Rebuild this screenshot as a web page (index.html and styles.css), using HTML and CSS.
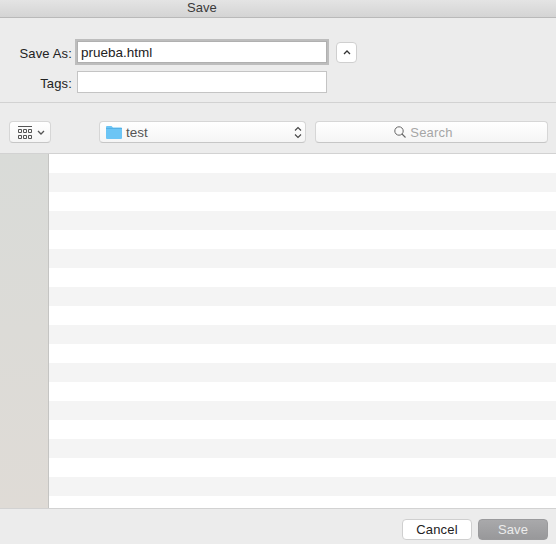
FILE: index.html
```html
<!DOCTYPE html>
<html lang="en">
<head>
    <meta charset="UTF-8">
    <title>Save</title>
    <link rel="stylesheet" href="styles.css">
</head>
<body>
    <div class="dialog">
        <div class="titlebar">Save</div>

        <div class="form">
            <div class="form-row">
                <label class="form-label" for="save-as">Save As:</label>
                <input class="field field-focus" id="save-as" type="text" value="prueba.html">
                <button class="collapse-btn">
                    <svg width="8" height="5" viewBox="0 0 8 5"><path d="M1 4L4 1L7 4" fill="none" stroke="#333" stroke-width="1.3"/></svg>
                </button>
            </div>
            <div class="form-row form-row-tags">
                <label class="form-label" for="tags">Tags:</label>
                <input class="field" id="tags" type="text">
            </div>
        </div>

        <div class="toolbar">
            <button class="tool-btn view-btn">
                <svg width="15" height="13" viewBox="0 0 15 13">
                    <path d="M0 0.5H14" stroke="#555" fill="none"/>
                    <path d="M0.5 3.5h3v3h-3zM5.5 3.5h3v3h-3zM10.5 3.5h3v3h-3zM0.5 9.5h3v3h-3zM5.5 9.5h3v3h-3zM10.5 9.5h3v3h-3z" stroke="#555" fill="none"/>
                </svg>
                <svg width="8" height="5" viewBox="0 0 8 5"><path d="M1 1L4 4L7 1" fill="none" stroke="#555" stroke-width="1.3"/></svg>
            </button>
            <button class="tool-btn folder-btn">
                <svg width="16" height="14" viewBox="0 0 16 14">
                    <path d="M0 2a1 1 0 0 1 1-1h4.5l1.5 1.5h8a1 1 0 0 1 1 1V13a1 1 0 0 1-1 1H1a1 1 0 0 1-1-1z" fill="#6cc5f5"/>
                    <path d="M0 3.5H16" stroke="#4aa8e0" stroke-width="0.7"/>
                </svg>
                <span class="folder-name">test</span>
                <svg class="stepper" width="8" height="13" viewBox="0 0 8 13"><path d="M1 4.5L4 1.5L7 4.5M1 8.5L4 11.5L7 8.5" fill="none" stroke="#444" stroke-width="1.1"/></svg>
            </button>
            <div class="tool-btn search-box">
                <svg width="12" height="12" viewBox="0 0 12 12"><circle cx="5" cy="5" r="4.2" fill="none" stroke="#666" stroke-width="1"/><path d="M8 8L11.5 11.5" stroke="#666" stroke-width="1.1"/></svg>
                <span>Search</span>
            </div>
        </div>

        <div class="browser">
            <div class="sidebar"></div>
            <div class="file-list"></div>
        </div>

        <div class="footer">
            <button class="footer-btn cancel-btn">Cancel</button>
            <button class="footer-btn save-btn">Save</button>
        </div>
    </div>
</body>
</html>
```

FILE: styles.css
```css
* {
    box-sizing: border-box;
}
html, body {
    margin: 0;
    height: 100%;
}
body {
    font-family: "Liberation Sans", Arial, sans-serif;
    font-size: 13px;
    color: #222;
    background-color: #ececec;
}
button, input {
    font-family: inherit;
    font-size: 13px;
    margin: 0;
}
.dialog {
    display: flex;
    flex-direction: column;
    width: 556px;
    height: 544px;
    overflow: hidden;
}
.titlebar {
    height: 18px;
    line-height: 15px;
    padding-left: 187px;
    color: #3a3a3a;
    background: linear-gradient(#e4e4e4, #d4d4d4);
    border-bottom: 1px solid #b9b9b9;
}
.form {
    height: 85px;
    padding-top: 23px;
    border-bottom: 1px solid #d2d2d2;
}
.form-row {
    display: flex;
    align-items: center;
    height: 22px;
}
.form-row-tags {
    margin-top: 8px;
}
.form-label {
    width: 72px;
    padding-top: 2px;
    text-align: right;
    margin-right: 5px;
    color: #222;
    letter-spacing: 0.15px;
}
.field {
    width: 250px;
    height: 22px;
    padding: 1px 3px 0;
    color: #222;
    background-color: white;
    border: 1px solid #c4c4c4;
    outline: none;
}
.field-focus {
    border-color: #b0b0b0;
    box-shadow: 0 0 0 2px #bdbdbd;
    font-size: 13.5px;
}
.collapse-btn {
    display: flex;
    align-items: center;
    justify-content: center;
    width: 21px;
    height: 21px;
    margin-left: 9px;
    padding: 0;
    background-color: white;
    border: 1px solid #cfcfcf;
    border-radius: 4px;
}
.toolbar {
    display: flex;
    align-items: flex-start;
    height: 51px;
    padding: 18px 8px 0 9px;
    border-bottom: 1px solid #d2d2d2;
}
.tool-btn {
    display: flex;
    align-items: center;
    height: 22px;
    background: linear-gradient(#ffffff, #f5f5f5);
    border: 1px solid #d6d6d6;
    border-bottom-color: #c6c6c6;
    border-radius: 4px;
    padding: 0;
}
.view-btn {
    width: 42px;
    gap: 4px;
    padding-left: 8px;
}
.folder-btn {
    width: 207px;
    margin-left: 48px;
    padding: 0 3px 0 6px;
    color: #555;
}
.folder-name {
    margin-left: 4px;
    font-size: 13.5px;
}
.stepper {
    margin-left: auto;
}
.search-box {
    width: 233px;
    margin-left: 9px;
    padding-right: 16px;
    justify-content: center;
    gap: 4px;
    color: #a6a6a6;
    letter-spacing: 0.2px;
}
.browser {
    display: flex;
    flex: 1;
    min-height: 0;
}
.sidebar {
    width: 49px;
    background: linear-gradient(#d9dbd8, #dfdbd6);
    border-right: 1px solid #c4c4c2;
}
.file-list {
    flex: 1;
    background: repeating-linear-gradient(#ffffff 0, #ffffff 19px, #f4f4f4 19px, #f4f4f4 38px);
}
.footer {
    display: flex;
    justify-content: flex-end;
    gap: 6px;
    height: 36px;
    padding: 10px 8px 0 0;
    border-top: 1px solid #d2d2d2;
}
.footer-btn {
    width: 70px;
    height: 21px;
    padding: 0;
    border-radius: 4px;
    letter-spacing: 0.15px;
}
.cancel-btn {
    color: #222;
    background-color: white;
    border: 1px solid #cfcfcf;
}
.save-btn {
    color: #ececec;
    background: linear-gradient(#a9a9ab, #98989a);
    border: 1px solid #9a9a9c;
}
```
